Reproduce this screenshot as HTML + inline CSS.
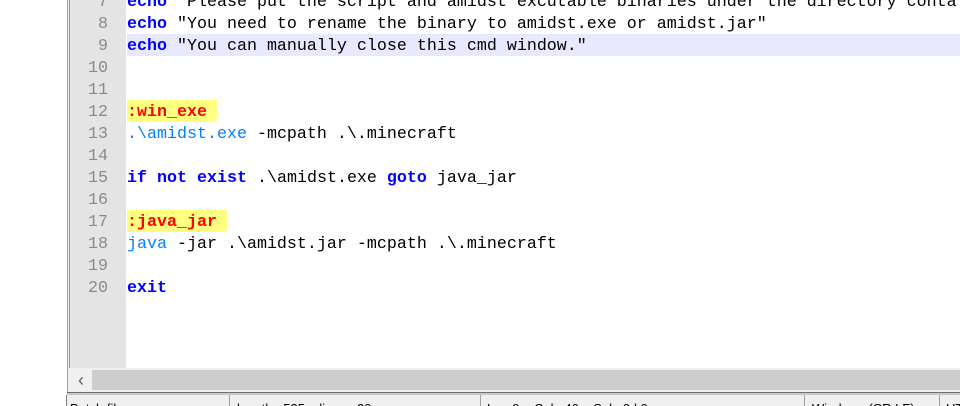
<!DOCTYPE html>
<html><head><style>
*{margin:0;padding:0}
body{width:960px;height:406px;overflow:hidden;background:#fff;position:relative;font-family:"Liberation Mono",monospace}
.frame{position:absolute;left:67px;top:0;width:893px;height:393px;border-left:1px solid #a0a0a0;background:#f0f0f0}
.inner{position:absolute;left:69px;top:0;width:891px;height:368px;background:#fff;border-left:1px solid #9a9a9a}
.gut{position:absolute;left:70px;top:0;width:56px;height:368px;background:#e4e4e4}
.hl{position:absolute;left:127px;top:34px;width:833px;height:22px;background:#e8e8ff}
.ln{position:absolute;left:70px;width:38px;text-align:right;color:#8a8a8a;font-size:16.67px;line-height:22px;height:22px;padding-top:2px}
.cd{position:absolute;left:127px;font-size:16.67px;line-height:22px;height:22px;white-space:pre;color:#000}
.cd>span.t{position:relative;top:2px}
.k{color:#0000ff;font-weight:bold}
.c{color:#0080ff}
.lab{color:#ff0000;font-weight:bold;background:#ffff80;display:inline-block;height:22px}
.lab b{position:relative;top:2px;font-weight:bold}
.sb{position:absolute;left:70px;top:370px;width:890px;height:20px;background:#cdcdcd}
.arr{position:absolute;left:70px;top:370px;width:22px;height:20px;background:#f0f0f0;color:#606060;font-size:18px;line-height:20px;text-align:center;font-family:"Liberation Sans",sans-serif}
.bl{position:absolute;left:67px;top:392px;width:893px;height:1px;background:#707070}
.bl2{position:absolute;left:67px;top:393px;width:893px;height:2px;background:#c8c8c8}
.st{position:absolute;left:66px;top:395px;width:894px;height:11px;background:#f0f0f0;border-left:1px solid #808080;overflow:hidden}
.st span{position:absolute;top:6px;font-family:"Liberation Sans",sans-serif;font-size:13px;line-height:15px;color:#000;white-space:pre}
.sep{position:absolute;top:0;width:1px;height:11px;background:#a0a0a0}
</style></head><body>
<div class="frame"></div>
<div class="inner"></div>
<div class="gut"></div>
<div class="hl"></div>

<div class="ln" style="top:-10px">7</div>
<div class="ln" style="top:12px">8</div>
<div class="ln" style="top:34px">9</div>
<div class="ln" style="top:56px">10</div>
<div class="ln" style="top:78px">11</div>
<div class="ln" style="top:100px">12</div>
<div class="ln" style="top:122px">13</div>
<div class="ln" style="top:144px">14</div>
<div class="ln" style="top:166px">15</div>
<div class="ln" style="top:188px">16</div>
<div class="ln" style="top:210px">17</div>
<div class="ln" style="top:232px">18</div>
<div class="ln" style="top:254px">19</div>
<div class="ln" style="top:276px">20</div>

<div class="cd" style="top:-10px"><span class="t"><span class="k">echo</span> "Please put the script and amidst excutable binaries under the directory conta</span></div>
<div class="cd" style="top:12px"><span class="t"><span class="k">echo</span> "You need to rename the binary to amidst.exe or amidst.jar"</span></div>
<div class="cd" style="top:34px"><span class="t"><span class="k">echo</span> "You can manually close this cmd window."</span></div>
<div class="cd" style="top:100px"><span class="lab"><b>:win_exe </b></span></div>
<div class="cd" style="top:122px"><span class="t"><span class="c">.\amidst.exe</span> -mcpath .\.minecraft</span></div>
<div class="cd" style="top:166px"><span class="t"><span class="k">if</span> <span class="k">not</span> <span class="k">exist</span> .\amidst.exe <span class="k">goto</span> java_jar</span></div>
<div class="cd" style="top:210px"><span class="lab"><b>:java_jar </b></span></div>
<div class="cd" style="top:232px"><span class="t"><span class="c">java</span> -jar .\amidst.jar -mcpath .\.minecraft</span></div>
<div class="cd" style="top:276px"><span class="t"><span class="k">exit</span></span></div>

<div class="sb"></div>
<div class="arr">&lsaquo;</div>
<div class="bl"></div><div class="bl2"></div>
<div class="st">
<span style="left:3px">Batch file</span>
<div class="sep" style="left:162px"></div>
<span style="left:170px">length : 535    lines : 20</span>
<div class="sep" style="left:413px"></div>
<span style="left:420px">Ln : 9    Col : 46    Sel : 0 | 0</span>
<div class="sep" style="left:737px"></div>
<span style="left:745px">Windows (CR LF)</span>
<div class="sep" style="left:872px"></div>
<span style="left:879px">UTF-8</span>
</div>
</body></html>
